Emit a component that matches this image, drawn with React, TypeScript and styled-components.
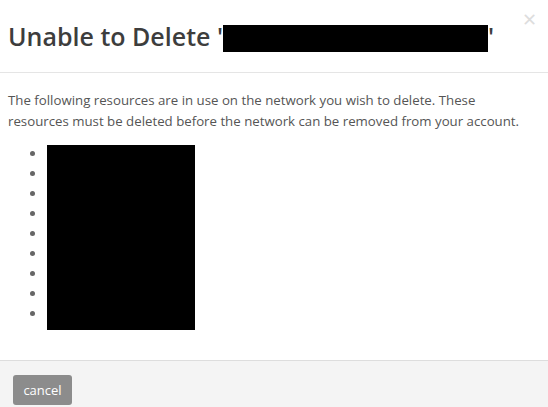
import React from 'react';
import styled, { createGlobalStyle } from 'styled-components';

const GlobalStyle = createGlobalStyle`
  html, body {
    margin: 0;
    padding: 0;
    background: #fff;
  }
  body {
    font-family: "Open Sans", "Noto Sans", Arial, sans-serif;
    width: 548px;
    height: 407px;
    overflow: hidden;
  }
`;

const Modal = styled.div`
  position: relative;
  display: flex;
  flex-direction: column;
  width: 548px;
  height: 407px;
  overflow: hidden;
  background: #fff;
`;

const Header = styled.div`
  padding: 20px 8px 19px 8px;
  border-bottom: 1px solid #e5e5e5;
`;

const Title = styled.h4`
  margin: 0;
  font-size: 25px;
  line-height: 33px;
  font-weight: 600;
  color: #3d3d3d;
  white-space: nowrap;
`;

const Redacted = styled.span<{ $w: number; $h: number }>`
  display: inline-block;
  width: ${(p) => p.$w}px;
  height: ${(p) => p.$h}px;
  background: #000;
  vertical-align: -6px;
`;

const Close = styled.button`
  position: absolute;
  top: 6px;
  right: 11px;
  padding: 0;
  border: 0;
  background: transparent;
  font-family: "DejaVu Sans", sans-serif;
  font-size: 18px;
  line-height: 28px;
  color: #000;
  opacity: 0.13;
  cursor: pointer;
`;

const Body = styled.div`
  padding: 17px 20px 36px 8px;
`;

const Message = styled.p`
  margin: 0 0 12px 0;
  font-size: 13.25px;
  line-height: 21px;
  color: #555;
`;

const ListArea = styled.div`
  position: relative;
`;

const ResourceList = styled.ul`
  margin: 0;
  padding-left: 39px;
  color: #666;
  font-size: 14px;
  line-height: 20px;
`;

const ResourceItem = styled.li`
  color: #666;
`;

const ListCover = styled.div`
  position: absolute;
  top: 1px;
  left: 39px;
  width: 148px;
  height: 185px;
  background: #000;
`;

const Footer = styled.div`
  flex: 1;
  display: flex;
  align-items: flex-start;
  padding: 14px 13px;
  background: #f4f4f4;
  border-top: 1px solid #ddd;
`;

const CancelButton = styled.button`
  height: 30px;
  width: 59px;
  padding: 0;
  border: 0;
  border-radius: 3px;
  background: #8c8c8c;
  color: #fff;
  font-family: "Open Sans", "Noto Sans", Arial, sans-serif;
  font-size: 13px;
  line-height: 30px;
  cursor: pointer;
`;

const resources = Array.from({ length: 9 }, (_, i) => `resource-${i + 1}`);

export default function App() {
  return (
    <>
      <GlobalStyle />
      <Modal>
        <Close aria-label="close">✕</Close>
        <Header>
          <Title>
            Unable to Delete '<Redacted $w={265} $h={27} />'
          </Title>
        </Header>
        <Body>
          <Message>
            The following resources are in use on the network you wish to delete. These resources
            must be deleted before the network can be removed from your account.
          </Message>
          <ListArea>
            <ResourceList>
              {resources.map((r) => (
                <ResourceItem key={r}>{r}</ResourceItem>
              ))}
            </ResourceList>
            <ListCover />
          </ListArea>
        </Body>
        <Footer>
          <CancelButton>cancel</CancelButton>
        </Footer>
      </Modal>
    </>
  );
}
